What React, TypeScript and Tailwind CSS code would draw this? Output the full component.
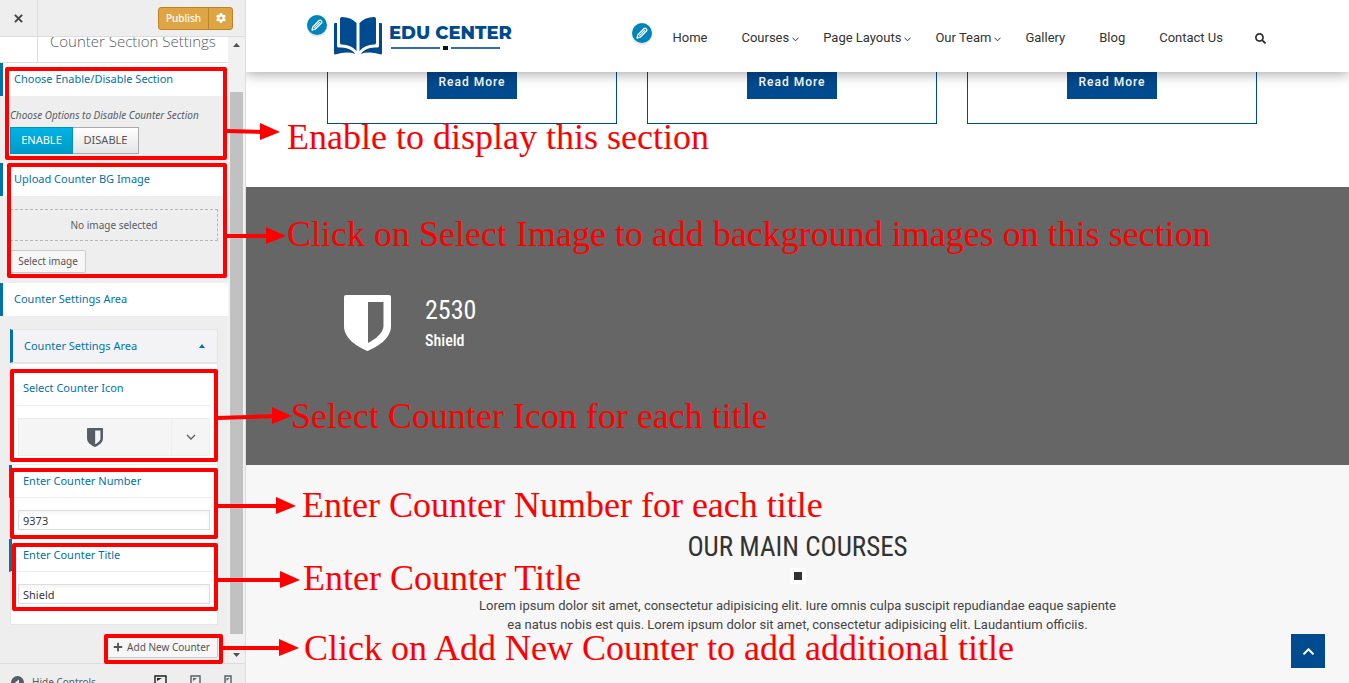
import React from "react";
import { FaChevronUp, FaPlus, FaSearch } from "react-icons/fa";
import { FaGear } from "react-icons/fa6";

const UI = "font-['Noto_Sans','Open_Sans',sans-serif]";
const NARROW = "font-['Roboto_Condensed','Liberation_Sans_Narrow',sans-serif]";

function Shield({ className }: { className: string }) {
  return (
    <svg viewBox="0 0 47 56" className={className} fill="currentColor" aria-hidden="true">
      <path
        fillRule="evenodd"
        d="M2 0H45Q47 0 47 2V31C47 44 33 52 23.500 56C14 52 0 44 0 31V2Q0 0 2 0ZM24 7V48C31 44.500 39.500 38 39.500 31V7Z"
      />
    </svg>
  );
}

function SectionTitle({ children }: { children: React.ReactNode }) {
  return (
    <h3 className="flex h-[33px] items-center border-l-[3px] border-[#0073aa] bg-white pl-[11px] text-[11px] text-[#0073aa]">
      {children}
    </h3>
  );
}

function Field({ id, label, value }: { id: string; label: string; value: string }) {
  return (
    <div className="border-t border-[#eee] pb-2">
      <label
        htmlFor={id}
        className="-ml-0.5 flex h-[33px] items-center border-b border-l-[3px] border-b-[#eee] border-l-[#0073aa] pl-[11px] text-[11px] text-[#0073aa]"
      >
        {label}
      </label>
      <input
        id={id}
        defaultValue={value}
        className="mx-[7px] mt-3 block h-5 w-[calc(100%-14px)] border border-[#ddd] bg-white px-1 text-[11px] text-[#32373c] shadow-inner outline-none"
      />
    </div>
  );
}

function Sidebar() {
  return (
    <aside className={`flex h-screen w-[246px] shrink-0 flex-col border-r border-[#ddd] bg-[#eee] ${UI}`}>
      <div className="flex h-[37px] shrink-0 items-center border-b border-[#ddd]">
        <button aria-label="Close" className="flex h-full w-[38px] items-center justify-center border-r border-[#ddd] text-[#444]">
          <svg viewBox="0 0 10 10" className="size-[9px]" stroke="currentColor" strokeWidth="2.200">
            <path d="M1 1L9 9M9 1L1 9" />
          </svg>
        </button>
        <div className="mr-3 ml-auto flex h-[23px] rounded-[3px] border border-[#bd8427] bg-[#dfa544] text-white">
          <button className="w-[50px] border-r border-[#bd8427] text-[10px] font-medium">Publish</button>
          <button aria-label="Publish settings" className="flex w-[23px] items-center justify-center">
            <FaGear size={10} />
          </button>
        </div>
      </div>

      <div className="flex min-h-0 flex-1">
        <div className="w-[228px] shrink-0 overflow-hidden">
          <div className="flex h-[26px] border-b border-[#ddd] bg-white">
            <div className="w-[38px] shrink-0 border-r border-[#ddd]" />
            <h2 className="-mt-2 pl-3 font-['Open_Sans',sans-serif] text-[15px] leading-6 font-light whitespace-nowrap text-[#555d66]">
              Counter Section Settings
            </h2>
          </div>

          <SectionTitle>Choose Enable/Disable Section</SectionTitle>
          <div className="px-2.5 pt-3">
            <p className="text-[10px] leading-[15px] whitespace-nowrap text-[#555d66] italic">Choose Options to Disable Counter Section</p>
            <div className="mt-1 flex h-[27px] text-[11px]">
              <button className="w-[63px] border border-[#0092bc] bg-linear-to-b from-[#00b3e6] to-[#009ac7] text-white">ENABLE</button>
              <button className="w-[66px] border border-l-0 border-[#aaa] bg-linear-to-b from-white to-[#e4e4e4] text-[#555]">DISABLE</button>
            </div>
          </div>

          <div className="mt-[9px]">
            <SectionTitle>Upload Counter BG Image</SectionTitle>
          </div>
          <div className="px-2.5 pt-[13px]">
            <div className="flex h-8 items-center justify-center border border-dashed border-[#b4b9be] text-[10px] text-[#555d66]">
              No image selected
            </div>
            <button className="mt-[9px] h-[23px] w-[76px] rounded-[2px] border border-[#ccc] bg-[#f7f7f7] text-[10px] text-[#555]">
              Select image
            </button>
          </div>

          <div className="mt-2.5">
            <SectionTitle>Counter Settings Area</SectionTitle>
          </div>

          <div className="mx-2.5 mt-[13px]">
            <button className="flex h-[34px] w-full items-center justify-between border border-l-[3px] border-[#e5e5e5] border-l-[#0073aa] bg-[#f3f3f5] pr-3 pl-[11px] text-[11px] text-[#0073aa]">
              Counter Settings Area
              <svg viewBox="0 0 6 4" className="h-1 w-1.5" fill="currentColor"><path d="M0 4L3 0L6 4Z" /></svg>
            </button>
            <div className="border border-[#e5e5e5] bg-white">
              <div className="mx-[7px] flex h-[42px] items-center border-b border-[#eee] pt-2 pl-[5px] text-[11px] text-[#0073aa]">
                Select Counter Icon
              </div>
              <div className="mx-[7px] mt-3 mb-[8px] flex h-[38px] border border-[#eee] bg-[#f5f5f5] text-[#555d66]">
                <div className="flex flex-1 items-center justify-center">
                  <Shield className="h-[19px] w-4" />
                </div>
                <button aria-label="Choose icon" className="flex w-[38px] items-center justify-center border-l border-[#eee]">
                  <svg viewBox="0 0 10 6" className="h-1.5 w-2.5" fill="none" stroke="currentColor" strokeWidth="1.300"><path d="M1 1L5 5L9 1" /></svg>
                </button>
              </div>
              <Field id="counter-number" label="Enter Counter Number" value="9373" />
              <div className="pb-3">
                <Field id="counter-title" label="Enter Counter Title" value="Shield" />
              </div>
            </div>
            <button className="mt-[11px] ml-auto flex h-[22px] items-center gap-1 rounded-[2px] border border-[#ccc] bg-[#f7f7f7] px-[7px] text-[10px] whitespace-nowrap text-[#555]">
              <FaPlus size={10} />
              Add New Counter
            </button>
          </div>
        </div>

        <div className="flex flex-1 flex-col items-center bg-[#f1f1f1] text-[#505050]">
          <svg viewBox="0 0 7 4" className="mt-1.5 h-1 w-[7px]" fill="currentColor"><path d="M0 4L3.500 0L7 4Z" /></svg>
          <div className="mt-[45px] w-[13px] flex-1 bg-[#c1c1c1]" />
          <svg viewBox="0 0 7 4" className="mt-[19px] mb-1.5 h-1 w-[7px]" fill="currentColor"><path d="M0 0L3.500 4L7 0Z" /></svg>
        </div>
      </div>

      <div className="flex h-5 shrink-0 items-start overflow-hidden border-t border-[#ddd] pt-[11px] text-[#555d66]">
        <button className="ml-[11px] flex items-center gap-2 text-[10px] leading-[14px] whitespace-nowrap">
          <svg viewBox="0 0 13 13" className="size-[13px]"><circle cx="6.500" cy="6.500" r="6.500" fill="currentColor" /><path d="M8 3.500V9.500L4 6.500Z" fill="#eee" /></svg>
          Hide Controls
        </button>
        <div className="mr-[13px] ml-auto flex gap-[23px]">
          <button aria-label="Desktop" className="text-[#191e23]">
            <svg viewBox="0 0 13 13" className="size-[13px]" fill="none" stroke="currentColor" strokeWidth="1.400"><path d="M1 1H12V10H1Z" /><path d="M3 3H8L3 6Z" fill="currentColor" stroke="none" /></svg>
          </button>
          <button aria-label="Tablet">
            <svg viewBox="0 0 11 13" className="h-[13px] w-[11px]" fill="none" stroke="currentColor" strokeWidth="1.400"><path d="M1 1H10V12H1Z" /><path d="M3 3H7L3 6Z" fill="currentColor" stroke="none" /></svg>
          </button>
          <button aria-label="Mobile">
            <svg viewBox="0 0 8 13" className="h-[13px] w-2" fill="none" stroke="currentColor" strokeWidth="1.400"><path d="M1 1H7V12H1Z" /><path d="M2.500 3H5.500L2.500 6Z" fill="currentColor" stroke="none" /></svg>
          </button>
        </div>
      </div>
    </aside>
  );
}

function EditBadge({ className }: { className: string }) {
  return (
    <button aria-label="Edit" className={`absolute flex size-5 items-center justify-center rounded-full bg-[#0085ba] shadow-[0_2px_1px_rgba(46,68,83,0.15)] ${className}`}>
      <svg viewBox="0 0 12 12" className="size-3" fill="none" stroke="#fff" strokeWidth="1.200" strokeLinejoin="round">
        <path d="M1 11L1.800 7.800L8 1.500Q9 .6 10.200 1.700Q11.400 3 10.500 4L4.200 10.200Z" />
        <path d="M3.200 8.800L9 3M1 11L2.500 10.500" />
      </svg>
    </button>
  );
}

function Logo() {
  return (
    <a href="#home" className="flex items-center gap-1.5 text-[#004a8f]">
      <svg viewBox="0 0 50 38" className="h-[38px] w-[50px]" fill="currentColor" aria-hidden="true">
        <path d="M7 2Q7 0 9 0Q18 0 23.500 6V34Q18 27.500 9 27.500Q7 27.500 7 26Z" />
        <path d="M43 2Q43 0 41 0Q32 0 26.500 6V34Q32 27.500 41 27.500Q43 27.500 43 26Z" />
        <path d="M1 7Q1 6 2 6H4V29Q4 30.500 6 30.500Q17 29.500 22.500 37Q14 34 2 37.500Q1 37.500 1 36Z" />
        <path d="M49 7Q49 6 48 6H46V29Q46 30.500 44 30.500Q33 29.500 27.500 37Q36 34 48 37.500Q49 37.500 49 36Z" />
      </svg>
      <span className="flex flex-col">
        <span className="font-['Montserrat','Inter',sans-serif] text-[18px] leading-6 font-extrabold whitespace-nowrap">EDU CENTER</span>
        <svg viewBox="0 0 110 6" className="ml-0.5 h-1.5 w-[110px]" aria-hidden="true">
          <path d="M0 3H49M60 3H109" stroke="#2f6fae" strokeWidth="2" />
          <path d="M52 1H57V5H52Z" fill="#111" />
        </svg>
      </span>
    </a>
  );
}

const NAV = [
  { label: "Home", menu: false },
  { label: "Courses", menu: true },
  { label: "Page Layouts", menu: true },
  { label: "Our Team", menu: true },
  { label: "Gallery", menu: false },
  { label: "Blog", menu: false },
  { label: "Contact Us", menu: false },
];
const GAPS = ["", "ml-[34px]", "ml-6", "ml-6", "ml-6", "ml-[34px]", "ml-[34px]"];

function Preview() {
  return (
    <main className="relative flex h-screen min-w-0 flex-1 flex-col overflow-hidden bg-white font-['Roboto',sans-serif] text-[#333]">
      <header className="relative z-10 flex h-[72px] shrink-0 items-center bg-white pl-[87px] shadow-[0_2px_12px_rgba(0,0,0,0.35)]">
        <EditBadge className="top-[15px] left-[61px]" />
        <EditBadge className="top-[23px] left-[386px]" />
        <Logo />
        <nav className="mt-1 ml-auto flex items-center pr-[83px] text-[13px] whitespace-nowrap">
          {NAV.map((n, i) => (
            <a key={n.label} href="#nav" className={`flex items-center gap-[3px] ${GAPS[i]}`}>
              {n.label}
              {n.menu && (
                <svg viewBox="0 0 7 5" className="mt-0.5 h-[5px] w-[7px]" fill="none" stroke="currentColor"><path d="M.5 .7L3.500 3.800L6.500 .7" /></svg>
              )}
            </a>
          ))}
          <button aria-label="Search" className="ml-8"><FaSearch size={11} /></button>
        </nav>
      </header>

      <section className="flex h-[115px] shrink-0 items-start justify-center gap-[30px] pr-[11px]">
        {[1, 2, 3].map((n) => (
          <article key={n} className="flex h-[52px] w-[290px] justify-center border border-t-0 border-[#004a8f]">
            <a href="#more" className="flex h-[27px] w-[90px] justify-center bg-[#004a8f] pt-0.5 text-xs leading-4 font-medium tracking-[1px] text-white">
              Read More
            </a>
          </article>
        ))}
      </section>

      <section className={`flex h-[278px] shrink-0 items-start gap-[34px] bg-[#666] pt-[108px] pl-[98px] text-white ${NARROW}`}>
        <Shield className="h-14 w-[47px]" />
        <div>
          <p className="text-[26px] leading-[30px]">2530</p>
          <h4 className="mt-1 text-base leading-6 font-medium">Shield</h4>
        </div>
      </section>

      <section className="flex flex-1 flex-col items-center bg-[#f7f7f7] pt-[66px]">
        <h2 className={`text-[27px] leading-8 ${NARROW}`}>OUR MAIN COURSES</h2>
        <span className="mt-[5px] size-4 border-4 border-white bg-[#333]" />
        <p className="mt-3 max-w-[640px] text-center text-[13px] leading-[19px] text-[#444]">
          Lorem ipsum dolor sit amet, consectetur adipisicing elit. Iure omnis culpa suscipit repudiandae eaque sapiente ea natus nobis est quis. Lorem ipsum dolor sit amet, consectetur adipisicing elit. Laudantium officiis.
        </p>
      </section>

      <a href="#top" aria-label="Back to top" className="absolute right-6 bottom-[15px] flex size-[34px] items-center justify-center bg-[#004a8f] text-white">
        <FaChevronUp size={13} />
      </a>
    </main>
  );
}

const NOTES = [
  { text: "Enable to display this section", pos: "left-[287px] top-[117px]" },
  { text: "Click on Select Image to add background images on this section", pos: "left-[287px] top-[214px]" },
  { text: "Select Counter Icon for each title", pos: "left-[291px] top-[396px]" },
  { text: "Enter Counter Number for each title", pos: "left-[302px] top-[485px]" },
  { text: "Enter Counter Title", pos: "left-[303px] top-[558px]" },
  { text: "Click on Add New Counter to add additional title", pos: "left-[304px] top-[628px]" },
];

const BOXES = [
  "left-[5px] top-[67px] h-[93px] w-[222px]",
  "left-[7px] top-[163px] h-[115px] w-[220px]",
  "left-[10px] top-[369px] h-[93px] w-[208px]",
  "left-[10px] top-[468px] h-[71px] w-[208px]",
  "left-[12px] top-[543px] h-[68px] w-[206px]",
  "left-[104px] top-[634px] h-[30px] w-[119px]",
];

const ARROWS = [
  [227, 131, 280, 132],
  [227, 236, 286, 236],
  [217, 418, 292, 416],
  [217, 506, 296, 506],
  [217, 580, 300, 580],
  [222, 648, 299, 648],
];

function Annotations() {
  return (
    <div className="pointer-events-none absolute inset-0 z-20 overflow-hidden text-[#f00]">
      {BOXES.map((b) => (
        <div key={b} className={`absolute rounded-[2px] border-4 border-[#f00] ${b}`} />
      ))}
      <svg className="absolute inset-0 h-full w-full" fill="currentColor" stroke="currentColor" aria-hidden="true">
        {ARROWS.map(([x1, y1, x2, y2]) => (
          <g key={y1}>
            <path d={`M${x1} ${y1}L${x2 - 15} ${y2}`} strokeWidth="4" />
            <path d={`M${x2} ${y2}l-20 -9v17Z`} stroke="none" />
          </g>
        ))}
      </svg>
      {NOTES.map((n) => (
        <p key={n.text} className={`absolute font-['Liberation_Serif',serif] text-[36px] leading-10 whitespace-nowrap ${n.pos}`}>
          {n.text}
        </p>
      ))}
    </div>
  );
}

export default function App() {
  return (
    <div className="relative flex h-screen overflow-hidden">
      <Sidebar />
      <Preview />
      <Annotations />
    </div>
  );
}
